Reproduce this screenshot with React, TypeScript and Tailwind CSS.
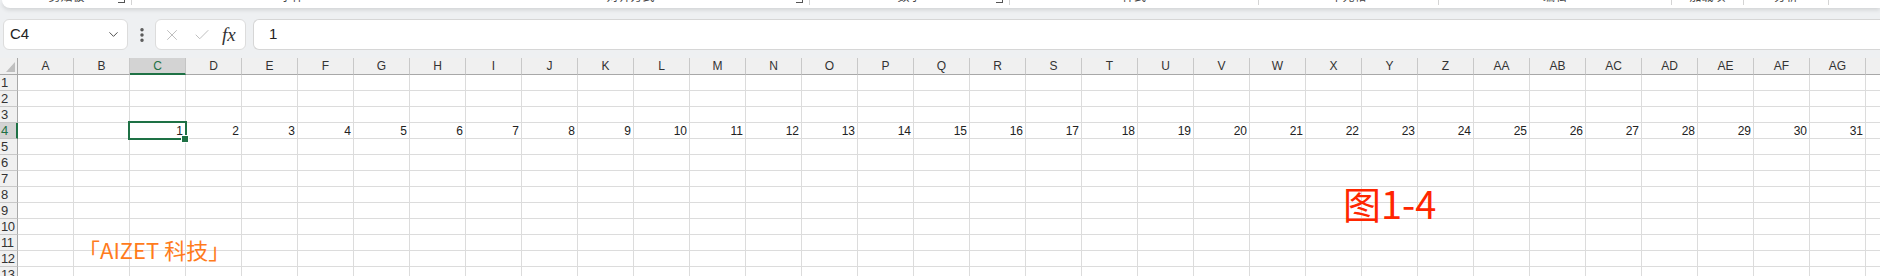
import { Check, ChevronDown, EllipsisVertical, X } from "lucide-react";

const COLS = [
  "A", "B", "C", "D", "E", "F", "G", "H", "I", "J", "K", "L", "M", "N", "O", "P", "Q",
  "R", "S", "T", "U", "V", "W", "X", "Y", "Z", "AA", "AB", "AC", "AD", "AE", "AF", "AG", "",
];

const ROWS = [1, 2, 3, 4, 5, 6, 7, 8, 9, 10, 11, 12, 13];

// ribbon groups, only their label bottoms peek out at the top
const groups = [
  { w: "w-[130px]", label: "剪贴板", launcher: true, sep: true },
  { w: "w-[320px]", label: "字体", launcher: false, sep: false },
  { w: "w-[358px]", label: "对齐方式", launcher: true, sep: true },
  { w: "w-[200px]", label: "数字", launcher: true, sep: true },
  { w: "w-[249px]", label: "样式", launcher: false, sep: true },
  { w: "w-[180px]", label: "单元格", launcher: false, sep: true },
  { w: "w-[233px]", label: "编辑", launcher: false, sep: true },
  { w: "w-[72px]", label: "加载项", launcher: false, sep: true },
  { w: "w-[85px]", label: "分析", launcher: false, sep: true },
];

export default function App() {
  return (
    <div className="w-[1880px] h-[276px] overflow-hidden bg-[#eef0f2] font-['Liberation_Sans','Noto_Sans_CJK_SC',sans-serif] text-[#222]">

      {/* RIBBON (cut off) */}
      <div className="h-[8px] ml-[2px] bg-white rounded-bl-[8px] shadow-[0_2px_4px_rgba(0,0,0,0.12)] flex overflow-hidden">
        {groups.map((g, i) => (
          <div
            key={i}
            className={`${g.w} shrink-0 h-[5px] flex items-start justify-center relative ${g.sep ? "border-r border-[#d4d4d4]" : ""}`}
          >
            <span className="text-[12px] leading-[12px] -mt-[9px] text-[#444]">{g.label}</span>
            {g.launcher && (
              <span className="absolute right-[6px] -top-[4px] w-[7px] h-[7px] border-r border-b border-[#555]"></span>
            )}
          </div>
        ))}
      </div>

      {/* FORMULA BAR */}
      <div className="flex items-center h-[31px] mt-[11px] pl-[3px]">
        <div className="w-[125px] h-[31px] bg-white border border-[#dcdcdc] rounded-[6px] flex items-center justify-between pl-[6px] pr-[6px]">
          <span className="text-[15px] text-[#222]">C4</span>
          <ChevronDown size={15} strokeWidth={1.5} className="text-[#444]" />
        </div>
        <div className="w-[27px] flex justify-center">
          <EllipsisVertical size={18} strokeWidth={2.6} className="text-[#555]" />
        </div>
        <div className="w-[91px] h-[31px] bg-white border border-[#dcdcdc] rounded-[6px] flex items-center pl-[7px] gap-[12px]">
          <X size={18} strokeWidth={1.2} className="text-[#b8b8b8]" />
          <Check size={18} strokeWidth={1.2} className="text-[#b8b8b8]" />
          <span className="font-['Liberation_Serif',serif] italic text-[19px] leading-none text-[#333] -ml-[1px]">fx</span>
        </div>
        <div className="flex-1 h-[31px] ml-[7px] bg-white border border-r-0 border-[#d6d6d6] rounded-l-[6px] flex items-center pl-[15px]">
          <span className="text-[15px] text-[#222]">1</span>
        </div>
      </div>

      {/* GRID */}
      <div className="relative mt-[8px] bg-white">
        <div className="grid grid-cols-[18px_repeat(34,56px)] text-[12px]">
          {/* header row */}
          <div className="h-[17px] bg-[#f0f0f0] border-r border-b border-[#a8a8a8] flex items-end justify-end p-[2px]">
            <svg width="9" height="10" viewBox="0 0 9 10">
              <polygon points="9,0 9,10 0,10" fill="#bfbfbf" />
            </svg>
          </div>
          {COLS.map((c, i) =>
            c === "C" ? (
              <div key={i} className="h-[17px] bg-[#d3d3d3] border-r border-[#c4c4c4] border-b-2 border-b-[#1e7145] flex items-center justify-center text-[#1e7145]">
                {c}
              </div>
            ) : (
              <div key={i} className="h-[17px] bg-[#f0f0f0] border-r border-[#c8c8c8] border-b border-b-[#a8a8a8] flex items-center justify-center text-[#333]">
                {c}
              </div>
            )
          )}

          {/* body rows */}
          {ROWS.map((r) => (
            <div key={r} className="contents">
              {r === 4 ? (
                <div className="h-[16px] bg-[#d3d3d3] border-r-2 border-[#1e7145] border-b border-b-[#c4c4c4] flex items-center text-[13px] text-[#1e7145] pl-[1px]">
                  {r}
                </div>
              ) : (
                <div className="h-[16px] bg-[#f0f0f0] border-r border-[#a8a8a8] border-b border-b-[#c8c8c8] flex items-center text-[13px] text-[#333] pl-[1px] tracking-[-0.5px]">
                  {r}
                </div>
              )}
              {COLS.map((c, i) => (
                <div key={i} className="h-[16px] border-r border-b border-[#dcdcdc] flex items-center justify-end pr-[2px] text-[#222]">
                  {r === 4 && c !== "" && i >= 2 ? i - 1 : ""}
                </div>
              ))}
            </div>
          ))}
        </div>

        {/* selection C4 */}
        <div className="absolute left-[128px] top-[63px] w-[59px] h-[19px] border-2 border-[#1e7145]"></div>
        <div className="absolute left-[181px] top-[77px] w-[8px] h-[8px] bg-[#1e7145] border border-white"></div>

        {/* watermark / caption */}
        <div className="absolute left-[78px] top-[179px] text-[22px] leading-[24px] text-[#ff7b1c] font-['Noto_Sans_CJK_SC',sans-serif]">
          「AIZET 科技」
        </div>
        <div className="absolute left-[1343px] top-[125px] text-[38px] leading-[40px] text-[#ff2600] font-['Noto_Sans_CJK_SC',sans-serif]">
          图1-4
        </div>
      </div>
    </div>
  );
}
